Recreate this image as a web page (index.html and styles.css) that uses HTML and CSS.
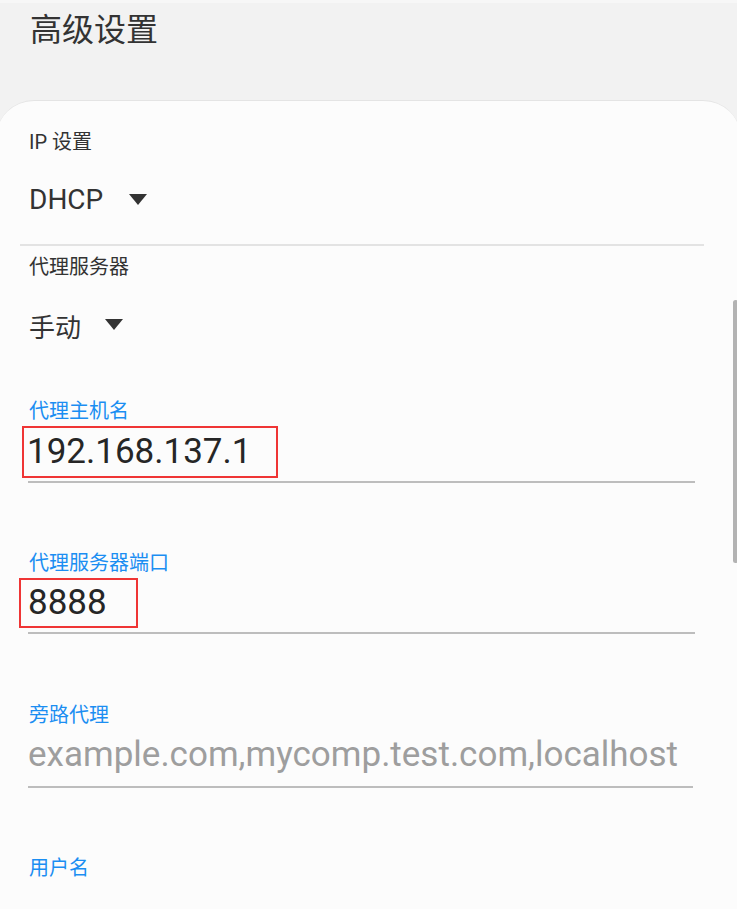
FILE: index.html
```html
<!DOCTYPE html>
<html lang="zh-CN">
<head>
<meta charset="utf-8">
<title>高级设置</title>
<link rel="stylesheet" href="styles.css">
</head>
<body>
<div class="screen">
  <div class="topstrip"></div>
  <header class="header">
    <h1 class="title">高级设置</h1>
  </header>
  <main class="card">
    <section class="group">
      <div class="label">IP 设置</div>
      <div class="select">
        <span class="select-value">DHCP</span>
        <span class="caret caret-dhcp"></span>
      </div>
    </section>
    <div class="divider"></div>
    <section class="group">
      <div class="label label-proxy">代理服务器</div>
      <div class="select select-proxy">
        <span class="select-value select-cjk">手动</span>
        <span class="caret caret-proxy"></span>
      </div>
    </section>

    <section class="field field-host">
      <div class="field-label">代理主机名</div>
      <div class="field-input">
        <span class="value mark mark-host">192.168.137.1</span>
      </div>
    </section>

    <section class="field field-port">
      <div class="field-label">代理服务器端口</div>
      <div class="field-input">
        <span class="value mark mark-port">8888</span>
      </div>
    </section>

    <section class="field field-bypass">
      <div class="field-label">旁路代理</div>
      <div class="field-input">
        <span class="value placeholder">example.com,mycomp.test.com,localhost</span>
      </div>
    </section>

    <section class="field field-user">
      <div class="field-label">用户名</div>
    </section>
  </main>
  <div class="scrollbar"></div>
</div>
</body>
</html>
```

FILE: styles.css
```css
* { box-sizing: border-box; }

html, body {
  margin: 0;
  padding: 0;
  background: #f2f2f2;
}

body {
  font-family: Roboto, "Noto Sans CJK SC", sans-serif;
  color: #333;
  overflow: hidden;
}

.screen {
  position: relative;
  width: 737px;
  height: 909px;
  overflow: hidden;
}

.topstrip {
  height: 3px;
  background: #f7f7f7;
}

.header {
  height: 97px;
  padding: 5px 0 0 30px;
}

.title {
  margin: 0;
  font-family: "Noto Sans CJK SC", sans-serif;
  font-weight: 400;
  font-size: 32px;
  line-height: 38px;
  color: #333;
}

.card {
  margin: 0 -4px 0 -4px;
  min-height: 820px;
  background: #fcfcfc;
  border-top: 1px solid #e4e4e4;
  border-radius: 38px 38px 0 0;
  padding: 29px 0 0 33px;
}

.label {
  font-family: Roboto, "Noto Sans CJK SC", sans-serif;
  font-size: 20px;
  line-height: 24px;
  color: #333;
}

.select {
  display: flex;
  align-items: center;
  margin-top: 29px;
  height: 34px;
}

.select-value {
  font-size: 28px;
  line-height: 34px;
  color: #333;
}

.select-cjk {
  font-family: "Noto Sans CJK SC", sans-serif;
  font-size: 26px;
}

.caret {
  width: 0;
  height: 0;
  border-left: 9px solid transparent;
  border-right: 9px solid transparent;
  border-top: 11px solid #333;
}

.caret-dhcp { margin-left: 26px; margin-top: -2px; }
.caret-proxy { margin-left: 24px; margin-top: -4px; }

.divider {
  margin: 27px 37px 0 -9px;
  height: 2px;
  background: #e3e3e3;
}

.label-proxy { margin-top: 9px; }

.select-proxy { margin-top: 30px; }

.field-label {
  font-family: "Noto Sans CJK SC", sans-serif;
  font-size: 20px;
  line-height: 24px;
  color: #1b8ef2;
}

.field-input {
  margin-right: 46px;
  margin-left: -1px;
  border-bottom: 2px solid #bdbdbd;
  height: 61px;
  display: flex;
  align-items: flex-start;
}

.value {
  font-family: Roboto, sans-serif;
  font-size: 35px;
  line-height: 44px;
  color: #262626;
}

.placeholder {
  color: #9e9e9e;
  font-size: 35px;
  margin-top: 7px;
}

.mark {
  border: 2px solid #ef3535;
  display: inline-block;
}

.mark-host {
  margin: 4px 0 0 -6px;
  padding: 2px 25px 2px 3px;
  height: 52px;
}

.mark-port {
  margin: 4px 0 0 -9px;
  padding: 1px 29px 0 7px;
  height: 50px;
}

.field-host { margin-top: 55px; }
.field-port { margin-top: 67px; }
.field-port .field-input { height: 60px; }
.field-bypass { margin-top: 68px; }
.field-bypass .field-input { height: 62px; margin-right: 48px; }
.field-user { margin-top: 67px; }

.scrollbar {
  position: absolute;
  left: 733px;
  top: 300px;
  width: 5px;
  height: 263px;
  border-radius: 3px;
  background: #b3b3b3;
}
```
